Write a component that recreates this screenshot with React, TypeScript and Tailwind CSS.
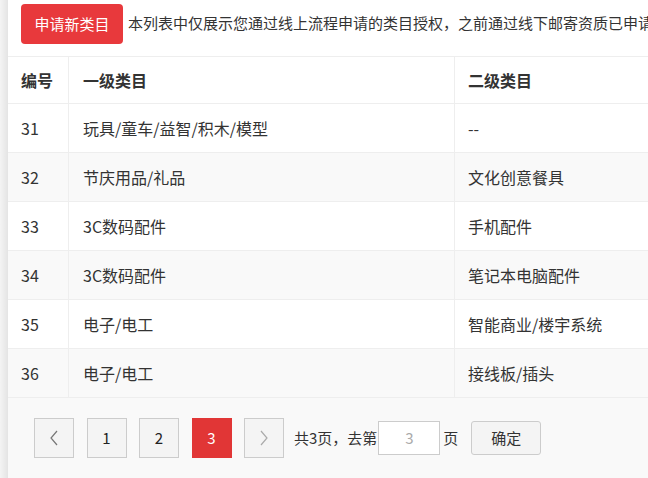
import React from 'react';

const rows = [
  { id: 31, first: '玩具/童车/益智/积木/模型', second: '--' },
  { id: 32, first: '节庆用品/礼品', second: '文化创意餐具' },
  { id: 33, first: '3C数码配件', second: '手机配件' },
  { id: 34, first: '3C数码配件', second: '笔记本电脑配件' },
  { id: 35, first: '电子/电工', second: '智能商业/楼宇系统' },
  { id: 36, first: '电子/电工', second: '接线板/插头' },
];

function PageButton({ children, active }: { children: React.ReactNode; active?: boolean }) {
  return (
    <div
      className={
        active
          ? 'flex h-10 w-10 items-center justify-center bg-[#e13636] text-white'
          : 'flex h-10 w-10 items-center justify-center border border-[#cccccc] bg-[#f4f4f4] text-[#222]'
      }
    >
      {children}
    </div>
  );
}

function Chevron({ dir, color }: { dir: 'left' | 'right'; color: string }) {
  return (
    <svg width="10" height="16" viewBox="0 0 10 16" fill="none">
      <path
        d={dir === 'left' ? 'M8 1L2 8l6 7' : 'M2 1l6 7-6 7'}
        stroke={color}
        strokeWidth="1.2"
      />
    </svg>
  );
}

export default function App() {
  return (
    <div
      className="flex h-[478px] w-[648px] overflow-hidden bg-white text-[#333]"
      style={{ fontFamily: '"Microsoft YaHei", "Noto Sans CJK SC", sans-serif' }}
    >
      <div className="w-2 shrink-0 bg-gradient-to-r from-[#f4f4f4] to-[#e4e4e4]" />
      <div className="flex min-w-0 flex-1 flex-col">
        {/* toolbar */}
        <div className="flex h-[57px] shrink-0 items-start overflow-hidden border-b border-[#eeeeee] pl-[13px] pt-1 text-[15px]">
          <button className="h-10 w-[102px] shrink-0 rounded bg-[#e8393c] text-[15px] text-white">
            申请新类目
          </button>
          <p className="mt-[8px] ml-[5px] whitespace-nowrap">
            本列表中仅展示您通过线上流程申请的类目授权，之前通过线下邮寄资质已申请的类目不在此列表中展示
          </p>
        </div>

        {/* table */}
        <div className="w-[800px] text-[16px]">
          <div className="flex h-[47px] items-center border-b border-[#eeeeee] font-bold">
            <div className="flex h-full w-[61px] items-center border-r border-[#eeeeee] pl-[13px]">编号</div>
            <div className="flex h-full w-[386px] items-center border-r border-[#eeeeee] pl-[14px]">一级类目</div>
            <div className="flex h-full flex-1 items-center pl-[13px]">二级类目</div>
          </div>
          {rows.map((r, i) => (
            <div
              key={r.id}
              className={
                i % 2 === 1
                  ? 'flex h-[49px] items-center border-b border-[#eeeeee] bg-[#f9f9f9]'
                  : 'flex h-[49px] items-center border-b border-[#eeeeee] bg-white'
              }
            >
              <div className="flex h-full w-[61px] items-center border-r border-[#eeeeee] pl-[13px]">{r.id}</div>
              <div className="flex h-full w-[386px] items-center border-r border-[#eeeeee] pl-[14px]">{r.first}</div>
              <div className="flex h-full flex-1 items-center pl-[13px]">{r.second}</div>
            </div>
          ))}
        </div>

        {/* pagination */}
        <div className="flex flex-1 items-start bg-[#f9f9f9] pl-[26px] pt-5 text-[15px]">
          <div className="flex items-center gap-[12.5px] text-[15px]">
            <PageButton>
              <Chevron dir="left" color="#777" />
            </PageButton>
            <PageButton>1</PageButton>
            <PageButton>2</PageButton>
            <PageButton active>3</PageButton>
            <PageButton>
              <Chevron dir="right" color="#aaa" />
            </PageButton>
          </div>
          <div className="ml-[10px] flex h-10 items-center">
            <span>共3页，去第</span>
            <div className="ml-[1px] flex h-[34px] w-[62px] items-center justify-center border border-[#cccccc] bg-white text-[#aaa]">
              3
            </div>
            <span className="ml-[3px]">页</span>
            <button className="ml-[13px] h-[34px] w-[70px] rounded-[3px] border border-[#cccccc] bg-[#f4f4f4] text-[#333]">
              确定
            </button>
          </div>
        </div>
      </div>
    </div>
  );
}
